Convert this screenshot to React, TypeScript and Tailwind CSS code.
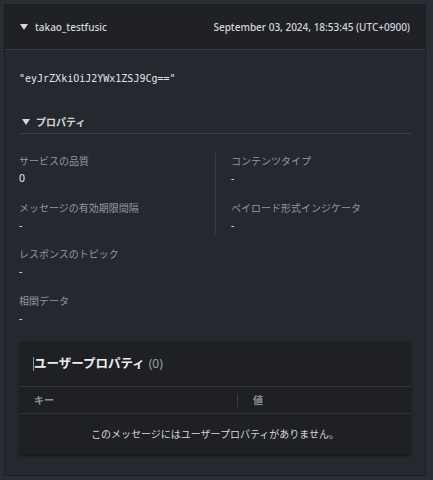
import React from "react";

const font = { fontFamily: '"Noto Sans", "Noto Sans CJK JP", sans-serif' };

function Field({ label, value }: { label: string; value: string }) {
  return (
    <div className="flex flex-col">
      <div className="h-[17px] leading-[17px] text-[10px] text-[#9296a0]">{label}</div>
      <div className="h-[17px] leading-[17px] text-[10.5px] text-[#e3e5e8]">{value}</div>
    </div>
  );
}

export default function App() {
  return (
    <div className="w-[433px] h-[480px] bg-[#2a2d33] pt-[4px] pl-[4px]" style={font}>
      <div className="w-[422px] h-[472px] bg-[#25282e] border border-[#1b1d21] flex flex-col">
        <div className="h-[45px] bg-[#1f2126] border-b border-[#393c43] flex items-center justify-between pl-[15px] pr-[15px]">
          <div className="flex items-center gap-[7px]">
            <svg width="8" height="7" viewBox="0 0 8 7"><path d="M0 0 L8 0 L4 6 Z" fill="#d5d7db" /></svg>
            <span className="text-[10px] font-medium text-[#d5d7db]">takao_testfusic</span>
          </div>
          <span className="text-[10px] font-medium text-[#d5d7db]">September 03, 2024, 18:53:45 (UTC+0900)</span>
        </div>
        <div className="flex flex-col px-[14px]">
          <div className="mt-[21px] h-[16px] leading-[16px] text-[10px] text-[#e3e5e8]" style={{ fontFamily: '"DejaVu Sans Mono", monospace' }}>
            "eyJrZXkiOiJ2YWx1ZSJ9Cg=="
          </div>
          <div className="mt-[28px] pb-[3px] border-b border-[#3a3d44] flex items-center gap-[6px] pl-[3px] h-[19px]">
            <svg width="8" height="7" viewBox="0 0 8 7"><path d="M0 0 L8 0 L4 6 Z" fill="#d5d7db" /></svg>
            <span className="text-[10px] font-bold text-[#d5d7db]">プロパティ</span>
          </div>
          <div className="mt-[19px] grid grid-cols-2">
            <div className="flex flex-col gap-[13px] pr-[10px]">
              <Field label="サービスの品質" value="0" />
              <Field label="メッセージの有効期限間隔" value="-" />
            </div>
            <div className="flex flex-col gap-[13px] border-l border-[#3a3d44] pl-[15px]">
              <Field label="コンテンツタイプ" value="-" />
              <Field label="ペイロード形式インジケータ" value="-" />
            </div>
          </div>
          <div className="mt-[12px] flex flex-col gap-[13px]">
            <Field label="レスポンスのトピック" value="-" />
            <Field label="相関データ" value="-" />
          </div>
          <div className="mt-[15px] bg-[#1e2024] shadow-[0_1px_2px_rgba(0,0,0,0.5)] flex flex-col">
            <div className="h-[45px] flex items-center pl-[14px] border-b border-[#33363c]">
              <span className="w-[1px] h-[14px] bg-[#8e939b]" />
              <span className="text-[12.5px] font-bold text-[#eceef1]">ユーザープロパティ</span>
              <span className="ml-[4px] text-[12px] text-[#9aa0a6]">(0)</span>
            </div>
            <div className="h-[27px] flex items-center border-b border-[#2f3238]">
              <div className="w-[219px] pl-[15px] text-[10px] font-bold text-[#8e939b] flex items-center justify-between">
                <span>キー</span>
                <span className="w-[1px] h-[13px] bg-[#3a3d44]" />
              </div>
              <div className="pl-[15px] text-[10px] font-bold text-[#8e939b]">値</div>
            </div>
            <div className="h-[41px] flex items-center justify-center text-[10px] text-[#d5d7db]">
              このメッセージにはユーザープロパティがありません。
            </div>
          </div>
        </div>
      </div>
    </div>
  );
}
